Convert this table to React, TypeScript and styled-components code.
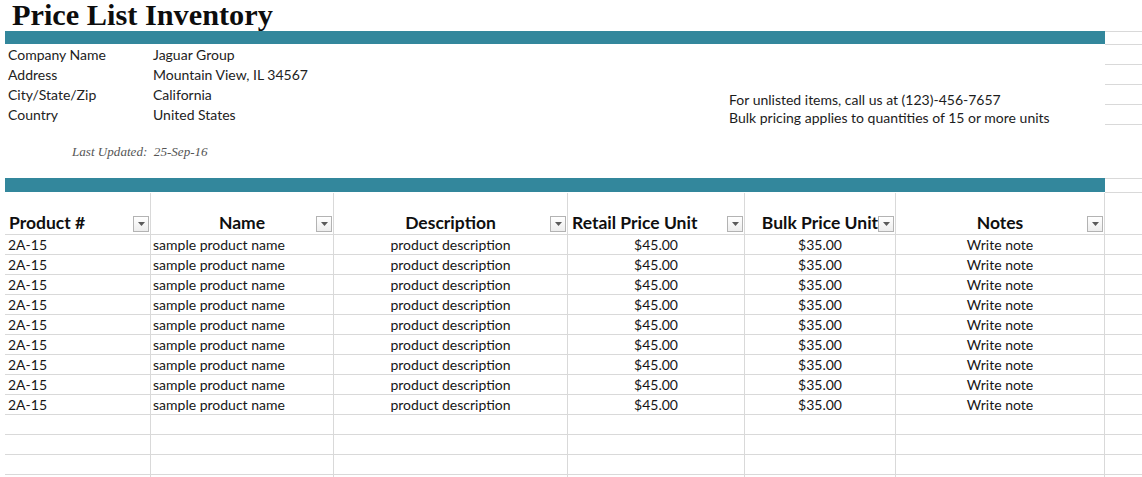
import React from 'react';
import styled, { createGlobalStyle } from 'styled-components';

const GRID = '#d9d9d9';
const TEAL = '#33879c';
const COLS = '146px 183px 234px 177px 151px 209px 37px';

const GlobalStyle = createGlobalStyle`
  html, body {
    margin: 0;
    padding: 0;
    background: #ffffff;
    overflow: hidden;
  }
  body {
    font-family: Lato, 'Liberation Sans', sans-serif;
    color: #1c1c1c;
  }
  * { box-sizing: border-box; }
`;

const Sheet = styled.div`
  width: 1137px;
  margin-left: 5px;
`;

const Title = styled.h1`
  margin: 0;
  height: 31px;
  padding-left: 7px;
  font-family: 'Liberation Serif', serif;
  font-weight: 700;
  font-size: 30.3px;
  line-height: 30px;
  color: #0d0d0d;
`;

const BandRow = styled.div<{ h: number }>`
  display: flex;
  height: ${p => p.h}px;
`;

const Band = styled.div<{ h: number }>`
  width: 1100px;
  height: ${p => p.h}px;
  background: ${TEAL};
`;

const BandGutter = styled.div`
  flex: 1;
  height: 100%;
  border-top: 1px solid ${GRID};
  border-bottom: 1px solid ${GRID};
`;

const InfoSection = styled.div`
  display: flex;
  height: 133px;
`;

const InfoMain = styled.div`
  width: 1100px;
  display: flex;
`;

const InfoLeft = styled.div`
  width: 724px;
`;

const InfoGrid = styled.div`
  display: grid;
  grid-template-columns: 145px auto;
  grid-auto-rows: 20px;
  font-size: 14px;
  line-height: 20px;
  color: #222;

  span {
    padding-left: 3px;
    white-space: nowrap;
  }
`;

const Updated = styled.div`
  margin-top: 17px;
  height: 20px;
  padding-left: 67px;
  font-family: 'Liberation Serif', serif;
  font-style: italic;
  font-size: 13.1px;
  line-height: 20px;
  color: #555;
  white-space: pre;
`;

const Notes = styled.div`
  padding-top: 46px;
  font-size: 14px;
  line-height: 18px;
  color: #1c1c1c;
`;

const Gutter = styled.div`
  flex: 1;
`;

const GutterLine = styled.div`
  height: 20px;
  border-bottom: 1px solid ${GRID};
`;

const Row = styled.div<{ head?: boolean }>`
  display: grid;
  grid-template-columns: ${COLS};
  height: ${p => (p.head ? 42 : 20)}px;
  border-bottom: 1px solid ${GRID};
`;

const Cell = styled.div<{ align?: string; pad?: number; last?: boolean }>`
  border-right: ${p => (p.last ? 'none' : `1px solid ${GRID}`)};
  padding-left: ${p => p.pad ?? 0}px;
  text-align: ${p => p.align ?? 'left'};
  font-size: 14px;
  line-height: 19px;
  color: #161616;
  white-space: nowrap;
  overflow: hidden;
`;

const HeadCell = styled.div<{ align?: string; pad?: number }>`
  position: relative;
  border-right: 1px solid ${GRID};
  display: flex;
  align-items: flex-end;
  justify-content: ${p => (p.align === 'center' ? 'center' : 'flex-start')};
  padding-left: ${p => p.pad ?? 0}px;
  padding-bottom: 1px;
  font-size: 17.5px;
  font-weight: 700;
  line-height: 20px;
  color: #0f0f0f;
  white-space: nowrap;
`;

const FilterButton = styled.div`
  position: absolute;
  right: 1px;
  bottom: 2px;
  width: 16px;
  height: 16px;
  border: 1px solid #b3b3b3;
  background: linear-gradient(#ffffff, #ededed);
  display: flex;
  align-items: center;
  justify-content: center;
`;

const Filter = () => (
  <FilterButton>
    <svg width="7" height="4" viewBox="0 0 7 4">
      <path d="M0 0 H7 L3.5 4 Z" fill="#5a5a5a" />
    </svg>
  </FilterButton>
);

const headers = [
  { label: 'Product #', align: 'left', pad: 4 },
  { label: 'Name', align: 'center', pad: 0 },
  { label: 'Description', align: 'center', pad: 0 },
  { label: 'Retail Price Unit', align: 'left', pad: 4 },
  { label: 'Bulk Price Unit', align: 'center', pad: 0 },
  { label: 'Notes', align: 'center', pad: 0 },
];

const info = [
  ['Company Name', 'Jaguar Group'],
  ['Address', 'Mountain View, IL 34567'],
  ['City/State/Zip', 'California'],
  ['Country', 'United States'],
];

const items = Array.from({ length: 9 }, () => ({
  sku: '2A-15',
  name: 'sample product name',
  description: 'product description',
  retail: '$45.00',
  bulk: '$35.00',
  note: 'Write note',
}));

const App: React.FC = () => (
  <>
    <GlobalStyle />
    <Sheet>
      <Title>Price List Inventory</Title>
      <BandRow h={14}>
        <Band h={13} />
        <BandGutter />
      </BandRow>
      <InfoSection>
        <InfoMain>
          <InfoLeft>
            <InfoGrid>
              {info.map(([k, v]) => (
                <React.Fragment key={k}>
                  <span>{k}</span>
                  <span>{v}</span>
                </React.Fragment>
              ))}
            </InfoGrid>
            <Updated>{'Last Updated:  25-Sep-16'}</Updated>
          </InfoLeft>
          <Notes>
            <div>For unlisted items, call us at (123)-456-7657</div>
            <div>Bulk pricing applies to quantities of 15 or more units</div>
          </Notes>
        </InfoMain>
        <Gutter>
          {info.map(([k]) => (
            <GutterLine key={k} />
          ))}
        </Gutter>
      </InfoSection>
      <BandRow h={15}>
        <Band h={14} />
        <BandGutter />
      </BandRow>
      <Row head>
        {headers.map(h => (
          <HeadCell key={h.label} align={h.align} pad={h.pad}>
            {h.label}
            <Filter />
          </HeadCell>
        ))}
        <Cell last />
      </Row>
      {items.map((it, i) => (
        <Row key={i}>
          <Cell pad={3}>{it.sku}</Cell>
          <Cell pad={2}>{it.name}</Cell>
          <Cell align="center">{it.description}</Cell>
          <Cell align="center">{it.retail}</Cell>
          <Cell align="center">{it.bulk}</Cell>
          <Cell align="center">{it.note}</Cell>
          <Cell last />
        </Row>
      ))}
      {[0, 1, 2, 3].map(i => (
        <Row key={`e${i}`}>
          <Cell />
          <Cell />
          <Cell />
          <Cell />
          <Cell />
          <Cell />
          <Cell last />
        </Row>
      ))}
    </Sheet>
  </>
);

export default App;
